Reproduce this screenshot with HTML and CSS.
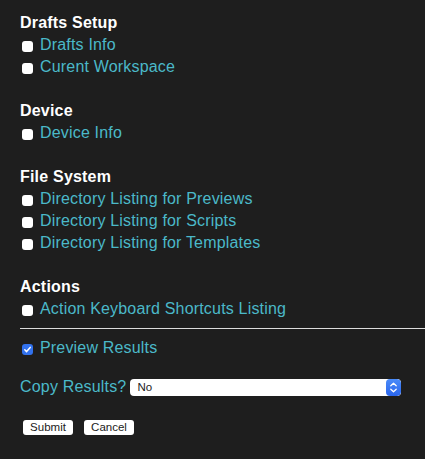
FILE: index.html
```html
<!DOCTYPE html>
<html>
<head>
<meta charset="utf-8">
<link rel="stylesheet" href="styles.css">
</head>
<body>
<form class="page">
  <div class="section">
    <div class="heading">Drafts Setup</div>
    <label class="row"><span class="box"></span><span class="label">Drafts Info</span></label>
    <label class="row"><span class="box"></span><span class="label">Curent Workspace</span></label>
  </div>
  <div class="section">
    <div class="heading">Device</div>
    <label class="row"><span class="box"></span><span class="label">Device Info</span></label>
  </div>
  <div class="section">
    <div class="heading">File System</div>
    <label class="row"><span class="box"></span><span class="label">Directory Listing for Previews</span></label>
    <label class="row"><span class="box"></span><span class="label">Directory Listing for Scripts</span></label>
    <label class="row"><span class="box"></span><span class="label">Directory Listing for Templates</span></label>
  </div>
  <div class="section last">
    <div class="heading">Actions</div>
    <label class="row"><span class="box"></span><span class="label">Action Keyboard Shortcuts Listing</span></label>
  </div>
  <div class="rule"></div>
  <label class="row"><span class="box checked"><svg viewBox="0 0 11 11" width="11" height="11"><path d="M2.8 5.8 L4.6 7.6 L8.2 3.4" fill="none" stroke="#fff" stroke-width="1.5" stroke-linecap="round" stroke-linejoin="round"/></svg></span><span class="label">Preview Results</span></label>
  <div class="copy">
    <span class="label">Copy Results?</span>
    <div class="select">
      <span class="value">No</span>
      <span class="stepper"><svg viewBox="0 0 15 17" width="15" height="17"><path d="M4.8 6.8 L7.5 4.3 L10.2 6.8 M4.8 10.2 L7.5 12.7 L10.2 10.2" fill="none" stroke="#fff" stroke-width="1.3" stroke-linecap="round" stroke-linejoin="round"/></svg></span>
    </div>
  </div>
  <div class="buttons">
    <span class="btn">Submit</span>
    <span class="btn">Cancel</span>
  </div>
</form>
</body>
</html>
```
FILE: styles.css
```css
html, body {
  margin: 0;
  background: #1e1e1e;
}
body {
  font-family: "Liberation Sans", Arial, sans-serif;
  font-size: 16px;
  line-height: 22px;
  overflow: hidden;
}
.page {
  padding: 12px 0 0 20px;
}
.section {
  margin-bottom: 22px;
}
.section.last {
  margin-bottom: 0;
}
.heading {
  color: #ffffff;
  font-weight: bold;
  letter-spacing: 0.2px;
}
.row {
  display: flex;
  align-items: center;
  height: 22px;
}
.box {
  width: 11px;
  height: 11px;
  margin: 2px 7px 0 2px;
  background: #ffffff;
  border-radius: 3px;
  flex: none;
  display: block;
}
.box svg {
  display: block;
}
.box.checked {
  background: #3272ee;
}
.label {
  color: #4bb9c9;
  letter-spacing: 0.18px;
}
.rule {
  height: 1px;
  background: #dcdcdc;
  margin: 8px 0 8px 0;
}
.copy {
  display: flex;
  align-items: center;
  height: 22px;
  margin-top: 17px;
}
.select {
  margin-left: 4px;
  width: 271px;
  height: 17px;
  background: #ffffff;
  border-radius: 4px;
  display: flex;
  align-items: center;
  justify-content: space-between;
  overflow: hidden;
}
.value {
  font-size: 11.5px;
  color: #222;
  padding-left: 7px;
  line-height: 17px;
}
.stepper {
  width: 15px;
  height: 17px;
  background: linear-gradient(#4a8bf8, #2a66ee);
  border-radius: 4px;
  display: block;
}
.stepper svg {
  display: block;
}
.buttons {
  display: flex;
  gap: 11px;
  margin: 22px 0 0 3px;
}
.btn {
  width: 50px;
  height: 15px;
  background: #ffffff;
  border-radius: 3px;
  color: #222;
  font-size: 11.5px;
  line-height: 15px;
  text-align: center;
}
```
